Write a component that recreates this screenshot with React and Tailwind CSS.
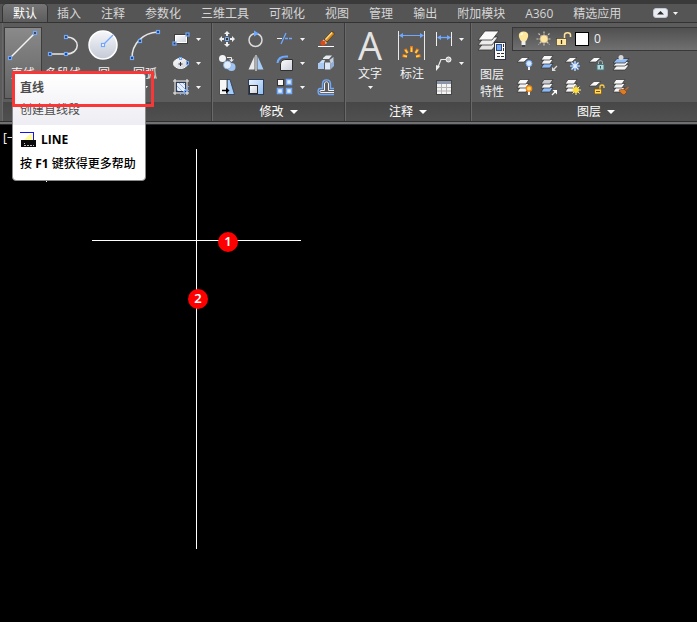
const BLUE = "#6ea8ff";

const tabs = [
  "默认",
  "插入",
  "注释",
  "参数化",
  "三维工具",
  "可视化",
  "视图",
  "管理",
  "输出",
  "附加模块",
  "A360",
  "精选应用",
];

const Icon = ({ children, w = 20, h = 20 }) => (
  <svg width={w} height={h} viewBox={`0 0 ${w} ${h}`} fill="none" className="shrink-0" aria-hidden="true">
    {children}
  </svg>
);

// blue square grip used on the drawing icons
const Grip = ({ x, y }) => (
  <rect x={x - 1.5} y={y - 1.5} width="3" height="3" fill="#334" stroke={BLUE} strokeWidth="1.2" />
);

const Caret = () => (
  <svg width="5" height="3" viewBox="0 0 5 3" className="shrink-0" aria-hidden="true">
    <path d="M0 0H5L2.5 3Z" fill="#f4f4f4" />
  </svg>
);

const Gradients = () => (
  <svg width="0" height="0" className="absolute" aria-hidden="true">
    <defs>
      <linearGradient id="silver" x1="0" y1="0" x2="1" y2="1">
        <stop offset="0" stopColor="#ffffff" />
        <stop offset="1" stopColor="#c9ced9" />
      </linearGradient>
      <linearGradient id="sky" x1="0" y1="0" x2="1" y2="1">
        <stop offset="0" stopColor="#eaf3ff" />
        <stop offset="1" stopColor="#8fbdf2" />
      </linearGradient>
      <linearGradient id="disc" x1="0" y1="0" x2="0" y2="1">
        <stop offset="0" stopColor="#f6f7fa" />
        <stop offset="1" stopColor="#c3c9d6" />
      </linearGradient>
    </defs>
  </svg>
);

/* ---------- draw ---------- */

const LineIcon = () => (
  <Icon w={38} h={34}>
    <path d="M6 31L31 6" stroke="#f5f5f5" strokeWidth="1.5" />
    <Grip x={6} y={31} />
    <Grip x={31} y={6} />
  </Icon>
);

const PolylineIcon = () => (
  <Icon w={40} h={34}>
    <path d="M7 27H23C38 27 38 10 23 10" stroke="#e6e6e6" strokeWidth="1.5" />
    <Grip x={7} y={27} />
    <Grip x={23} y={27} />
    <Grip x={23} y={10} />
  </Icon>
);

const CircleIcon = () => (
  <Icon w={40} h={34}>
    <circle cx="19" cy="18" r="14" fill="url(#disc)" stroke="#fff" strokeWidth="1.5" />
    <path d="M19 18L29 8" stroke={BLUE} strokeWidth="1.3" />
    <rect x="17.5" y="16.5" width="3" height="3" fill="#fff" stroke={BLUE} strokeWidth="1.2" />
  </Icon>
);

const ArcIcon = () => (
  <Icon w={40} h={34}>
    <path d="M7 31C7 17 17 6 33 5" stroke="#e6e6e6" strokeWidth="1.5" />
    <Grip x={7} y={31} />
    <Grip x={15} y={14} />
    <Grip x={33} y={5} />
  </Icon>
);

const RectIcon = () => (
  <Icon>
    <rect x="3.5" y="5.5" width="13" height="9" fill="url(#silver)" stroke="#3d3d3d" />
    <rect x="4.5" y="6.5" width="11" height="7" stroke="#fff" />
    <Grip x={3.5} y={14.5} />
    <Grip x={16.5} y={5.5} />
  </Icon>
);

const EllipseIcon = () => (
  <Icon>
    <ellipse cx="9.5" cy="10.5" rx="7" ry="5" fill="url(#silver)" stroke="#f6f6f6" />
    <path d="M9.5 9V13M7.5 11H11.5" stroke="#333" />
    <rect x="8.5" y="4.5" width="2" height="2" fill="#fff" stroke={BLUE} />
    <rect x="15.5" y="8.5" width="2" height="3" fill="#445" stroke={BLUE} />
  </Icon>
);

const HatchIcon = () => (
  <Icon>
    <rect x="5" y="5" width="10" height="10" fill="#e8effb" />
    <path d="M5 8L12 15M5 12L8 15M7 5L15 13M11 5L15 9" stroke="#8fb3ea" />
    <rect x="5.500" y="5.500" width="9" height="9" stroke="#2f3c58" />
    <path d="M4 2V18M16 2V18M2 4H18M2 16H18" stroke="#f3f3f3" />
    <path d="M9 18L18 9M13.5 18V13.5H18" stroke={BLUE} />
  </Icon>
);

/* ---------- modify ---------- */

const MoveIcon = () => (
  <Icon>
    <path d="M10 4V7M10 13V16M4 10H7M13 10H16" stroke="#eee" strokeWidth="2" />
    <path d="M10 2L13 5H7ZM10 18L7 15H13ZM2 10L5 7V13ZM18 10L15 13V7Z" fill="#f1f1f1" />
    <rect x="8.5" y="8.5" width="3" height="3" fill="#333" stroke={BLUE} />
  </Icon>
);

const RotateIcon = () => (
  <Icon>
    <circle cx="9.500" cy="11" r="6.500" stroke="#dcdcdc" strokeWidth="1.5" />
    <path d="M8 1.5L13 4.5L8 7.5Z" fill={BLUE} />
  </Icon>
);

const TrimIcon = () => (
  <Icon>
    <path d="M2 9.5H7" stroke="#f0f0f0" />
    <path d="M6 15L11 4" stroke={BLUE} strokeWidth="1.3" />
    <path d="M10 9.5H18" stroke={BLUE} strokeWidth="1.3" strokeDasharray="3 1" />
  </Icon>
);

const EraseIcon = () => (
  <Icon>
    <path d="M8 11L15.5 2.5L18 3.5V5.500L11 13Z" fill="#d98a1e" stroke="#4a3114" strokeWidth=".7" />
    <path d="M9.5 10.5L16 3.5" stroke="#ffe08a" strokeWidth="1.3" />
    <path d="M7.500 10.500L11 14L9.5 15L6.5 12Z" fill="#f1f1f1" />
    <circle cx="7" cy="14" r="2.500" fill="#e2480f" />
    <path d="M2 17.5H18" stroke="#fff" />
  </Icon>
);

const CopyIcon = () => (
  <Icon>
    <circle cx="5.5" cy="5.5" r="3.5" fill="#f2f3f6" />
    <path d="M10 4.5H14.5V7" stroke="#eee" />
    <path d="M12 6.5H17L14.5 9Z" fill="#eee" />
    <circle cx="14.500" cy="14" r="4" fill="#9fc4f3" />
    <circle cx="10.500" cy="12" r="4" fill="#e0ebfa" stroke="#85aee4" strokeWidth=".8" />
  </Icon>
);

const MirrorIcon = () => (
  <Icon>
    <path d="M8.5 3V16.5H2.5Z" fill="#e8eaee" />
    <path d="M11.5 3V16.5H17.5Z" fill="#a9cdf8" />
    <path d="M10 2V18" stroke="#fff" />
  </Icon>
);

const FilletIcon = () => (
  <Icon>
    <path d="M5.5 17.5V12C5.5 8 8 6.5 11 6.5H17.5V17.5Z" fill="url(#silver)" stroke="#2f2f2f" />
    <path d="M2.5 10C3 6 6 3.5 11 3.5H13" stroke={BLUE} strokeWidth="2" />
  </Icon>
);

const ExplodeIcon = () => (
  <Icon>
    <path d="M7 5L10 2.5H16L13 6H7Z" fill="#e6ebf3" />
    <path d="M13.500 7L17.5 4V9L15 11Z" fill="#c3cede" />
    <path d="M3 10L6 7H9L8 10V15H3Z" fill="#c8dcf6" />
    <path d="M2 10H8V16H2Z" fill="#a9c8f2" />
    <path d="M9 9.500H14.5V16.500H9Z" fill="#dbe7f8" />
    <path d="M15 11L18 8V13L15 16Z" fill="#8fb0dc" />
  </Icon>
);

const StretchIcon = () => (
  <Icon>
    <path d="M10 2.5H13L17.5 17.5H10Z" fill="#a5ccfa" stroke="#2a3850" strokeWidth=".8" />
    <path d="M2.5 2.5H10V17.5H2.5Z" fill="#f6f6f7" stroke="#3a3a3a" strokeWidth=".8" />
    <path d="M5 13.5H11" stroke="#000" strokeWidth="1.5" />
    <path d="M9 10.5L12.5 13.5L9 16.5Z" fill="#000" />
  </Icon>
);

const ScaleIcon = () => (
  <Icon>
    <rect x="2.5" y="2.5" width="15" height="15" fill="url(#sky)" stroke="#2c3d58" />
    <rect x="3.5" y="8.5" width="8" height="8" fill="url(#silver)" stroke="#2a2a2a" />
  </Icon>
);

const ArrayIcon = () => (
  <Icon>
    <rect x="2.5" y="2.5" width="6" height="6" fill="#f6f6f6" stroke="#333" />
    <rect x="11.5" y="2.5" width="5" height="5" fill="#dfebfb" stroke={BLUE} strokeWidth="1.5" />
    <rect x="2.5" y="11.5" width="5" height="5" fill="#dfebfb" stroke={BLUE} strokeWidth="1.5" />
    <rect x="11.5" y="11.5" width="5" height="5" fill="#dfebfb" stroke={BLUE} strokeWidth="1.5" />
  </Icon>
);

const OffsetIcon = () => (
  <Icon>
    <path
      d="M18 17.5H4C1.500 17.5 1.500 11.5 4 11.5H6.5V7C6.5 1.500 14.5 1.500 14.5 7V11.5H18"
      stroke={BLUE}
      strokeWidth="1.4"
    />
    <path d="M18 15.500H5C3.5 15.500 3.5 13.5 5 13.5H8.500V7C8.500 4 12.500 4 12.500 7V13.5H18" stroke="#f1f1f1" />
  </Icon>
);

/* ---------- annotate ---------- */

const TextIcon = () => (
  <span className="block h-[34px] w-10 text-center font-['Open_Sans',sans-serif] text-[38px] leading-[37px] text-[#e4e4e4]">
    A
  </span>
);

const DimensionIcon = () => (
  <Icon w={40} h={34}>
    <path d="M6.5 4V33M32.5 4V33" stroke="#e9e9e9" />
    <path d="M8 8.5H31" stroke={BLUE} />
    <path d="M7 8.5L11 6V11ZM32 8.5L28 6V11Z" fill={BLUE} />
    <path d="M19.5 25V19M15.500 26L13 22M23.500 26L26 22M15 29.500L10.500 28.500M24 29.500L28.500 28.500" stroke="#e5781a" strokeWidth="3" />
    <path d="M19.5 25V20.500M15.500 26L13.500 23M23.500 26L25.500 23M15 29.500L11.500 28.700M24 29.500L27.500 28.700" stroke="#ffd84a" strokeWidth="1.4" />
  </Icon>
);

const LinearIcon = () => (
  <Icon>
    <path d="M2.5 3V17M17.5 3V17" stroke="#f0f0f0" />
    <path d="M4 8.5H16" stroke={BLUE} strokeWidth="1.3" />
    <path d="M3 8.5L7 6V11ZM17 8.5L13 6V11Z" fill={BLUE} />
  </Icon>
);

const LeaderIcon = () => (
  <Icon>
    <path d="M4 14L7 6.5H12" stroke="#e8e8e8" strokeWidth="1.2" />
    <path d="M2 18L2 12L6 13.5Z" fill="#eee" />
    <circle cx="14.5" cy="6.5" r="2.5" fill="#bbb" stroke="#fff" />
  </Icon>
);

const TableIcon = () => (
  <Icon>
    <rect x="2.5" y="3.5" width="15" height="14" fill="#f4f4f4" stroke="#444" />
    <rect x="3" y="4" width="14" height="3" fill="#8c96ab" />
    <path d="M3 10.5H17M3 14H17M7.5 7V17M12.5 7V17" stroke="#b4b4b4" />
  </Icon>
);

/* ---------- layers ---------- */

const LayerPropsIcon = () => (
  <Icon w={38} h={34}>
    <path d="M5 23L11 15H25L19 23Z" fill="#e3e3e3" stroke="#333" strokeWidth=".8" />
    <path d="M5 18L11 10H25L19 18Z" fill="#ededed" stroke="#333" strokeWidth=".8" />
    <path d="M5 13L12 4H26L19 13Z" fill="#fafafa" stroke="#333" strokeWidth=".8" />
    <rect x="21.5" y="15.500" width="11" height="17" fill="#fbfbfb" stroke="#2d3342" />
    <rect x="23.5" y="17.5" width="5" height="6" fill="#78a9f4" stroke="#314c80" />
    <path d="M30.5 17V24M24 26.5H31M24 29.500H31" stroke="#333" strokeDasharray="3 1" />
  </Icon>
);

const Sheets = ({ bottom = "#f8f8f8", top = "#f8f8f8" }) => (
  <g stroke="#2e2e2e" strokeWidth=".7">
    <path d="M2 15L5 10.5H14L11 15Z" fill={bottom} />
    <path d="M2 11L5 6.5H14L11 11Z" fill="#f4f4f4" />
    <path d="M2 7L5 2.5H14L11 7Z" fill={top} />
  </g>
);

const Sheet = () => <path d="M2 9L7 4.5H14L9 9Z" fill="#fafafa" stroke="#333" strokeWidth=".7" />;

const LayerOffIcon = () => (
  <Icon>
    <Sheet />
    <path d="M14 12V17" stroke="#eee" strokeWidth="2" />
    <circle cx="14" cy="10.500" r="3" fill="#d5e8ff" stroke={BLUE} />
  </Icon>
);

const LayerIsolateIcon = () => (
  <Icon>
    <Sheets bottom="#8ebcf8" />
    <path d="M18 13L14.500 16.500" stroke="#ddd" strokeWidth="1.3" />
    <path d="M13 14V18H17Z" fill="#ddd" />
  </Icon>
);

const LayerFreezeIcon = () => (
  <Icon>
    <Sheet />
    <circle cx="12" cy="13" r="4" fill="#3972c8" />
    <path d="M12 8V18M7 13H17M8.5 9.5L15.5 16.5M15.5 9.5L8.5 16.5" stroke="#e4f0ff" strokeWidth="1.2" />
  </Icon>
);

const LayerLockIcon = () => (
  <Icon>
    <Sheet />
    <path d="M11.5 12V9.5C11.5 7 15.5 7 15.5 9.5V12" stroke="#9bbec2" />
    <rect x="10" y="11.5" width="7" height="5.5" fill="#b9d7d9" stroke="#43777b" />
    <path d="M13.5 13V15.5" stroke="#315b60" />
  </Icon>
);

const LayerCurrentIcon = () => (
  <Icon>
    <g stroke="#2c2c2c" strokeWidth=".7">
      <path d="M2 17L6 12H18L14 17Z" fill="#f5f5f5" />
      <path d="M2 13L6 8.5H18L14 13Z" fill="#f5f5f5" />
      <path d="M2 10L6 5.5H18L14 10Z" fill="#91bdf8" />
    </g>
    <circle cx="10" cy="4.5" r="2.5" fill="#d7d7d7" />
  </Icon>
);

const LayersOnIcon = () => (
  <Icon>
    <Sheets />
    <path d="M14 13V18" stroke="#f1f1f1" strokeWidth="2" />
    <circle cx="14" cy="11.5" r="2.7" fill="#ffd56b" stroke="#f5860a" strokeWidth="1.3" />
  </Icon>
);

const UnisolateIcon = () => (
  <Icon>
    <Sheets bottom="#8ebcf8" top="#c9cbd0" />
    <path d="M13 18L16 15" stroke="#fff" strokeWidth="1.3" />
    <path d="M13.5 13H18V17.5Z" fill="#fff" />
  </Icon>
);

const ThawIcon = () => (
  <Icon>
    <Sheets />
    <path d="M13 8V18M8 13H18M9.5 9.5L16.5 16.5M16.5 9.5L9.5 16.5" stroke="#ffef9a" />
    <circle cx="13" cy="13" r="3" fill="#ffdf35" />
  </Icon>
);

const UnlockIcon = () => (
  <Icon>
    <Sheet />
    <path d="M13 12V9.5C13 7.5 17 7.5 17 9.5V11" stroke="#ffcd42" strokeWidth="1.3" />
    <rect x="7.5" y="12" width="7" height="5" fill="#ffdc65" stroke="#8c5800" strokeWidth=".8" />
    <path d="M9 14.5H13" stroke="#825200" />
  </Icon>
);

const LayerMatchIcon = () => (
  <Icon>
    <Sheets />
    <path d="M17.5 10L14 13.5" stroke="#bd6b2c" strokeWidth="1.5" />
    <path d="M8 13L13 12L16 15L13 18C11 17 9 16 8 13Z" fill="#db7c2b" stroke="#733811" strokeWidth=".6" />
  </Icon>
);

const BulbIcon = () => (
  <Icon>
    <path d="M9.500 2.500C3.500 2.500 4 8 7 12H12C15 8 15.500 2.500 9.500 2.500Z" fill="#ffe79b" />
    <path d="M7.500 12H11.500V16H7.500Z" fill="#efefef" />
    <path d="M8 17H11" stroke="#222" />
    <path d="M7 6C7.5 5 8 4.5 9 4.5" stroke="#fff" strokeWidth="1.5" />
  </Icon>
);

const SunIcon = () => (
  <Icon>
    <path
      d="M10 2.5V17.5M2.5 10H17.5M4.5 4.5L15.5 15.5M15.5 4.5L4.5 15.5"
      stroke="#cfcabf"
      strokeWidth="1.2"
      strokeDasharray="2 1"
    />
    <circle cx="10" cy="10" r="4" fill="#ffe5a0" stroke="#b5aa8c" strokeWidth=".7" />
  </Icon>
);

const OpenLockIcon = () => (
  <Icon>
    <path d="M10.5 9V6C10.5 3 16.5 3 16.5 6V8" stroke="#ffe29a" strokeWidth="1.5" />
    <rect x="2.500" y="9.5" width="10" height="7" fill="#ffe7a2" stroke="#3a3328" strokeWidth=".6" />
    <path d="M7.500 11V15" stroke="#4a3505" strokeWidth="1.3" />
  </Icon>
);

/* ---------- ribbon parts ---------- */

const SmallTool = ({ label, icon: Glyph, menu }) => (
  <button type="button" aria-label={label} className="flex h-6 items-center gap-[5px]">
    <Glyph />
    {menu && <Caret />}
  </button>
);

const BigTool = ({ label, icon: Glyph, menu, active }) => (
  <button
    type="button"
    className={`flex h-[72px] flex-col items-center border ${
      active ? "w-[38px] border-[#3d3d3d] bg-linear-to-b from-[#8a8a8a] to-[#626262]" : "w-10 border-transparent"
    }`}
  >
    <span className="-mt-px">
      <Glyph />
    </span>
    <span className="mt-[5px] whitespace-nowrap leading-4">{label}</span>
    {menu && (
      <span className="mt-1">
        <Caret />
      </span>
    )}
  </button>
);

const Panel = ({ title, className = "", children }) => (
  <section className={`flex shrink-0 flex-col border-r border-[#3c3c3c] ${className}`}>
    <div className="flex border-l border-[#696969] pt-1 pb-[3px]">{children}</div>
    <button
      type="button"
      className="flex h-[19px] items-center justify-center gap-[6px] border-l border-[#696969] bg-linear-to-b from-[#474747] to-[#505050] pt-px text-white"
    >
      {title}
      {title && (
        <svg width="8" height="4" viewBox="0 0 8 4" aria-hidden="true">
          <path d="M0 0H8L4 4Z" fill="#fff" />
        </svg>
      )}
    </button>
  </section>
);

const modifyTools = [
  ["移动", MoveIcon],
  ["旋转", RotateIcon],
  ["修剪", TrimIcon, true],
  ["删除", EraseIcon],
  ["复制", CopyIcon],
  ["镜像", MirrorIcon],
  ["圆角", FilletIcon, true],
  ["分解", ExplodeIcon],
  ["拉伸", StretchIcon],
  ["缩放", ScaleIcon],
  ["阵列", ArrayIcon, true],
  ["偏移", OffsetIcon],
];

const layerTools = [
  ["关闭", LayerOffIcon],
  ["隔离", LayerIsolateIcon],
  ["冻结", LayerFreezeIcon],
  ["锁定", LayerLockIcon],
  ["置为当前", LayerCurrentIcon],
  ["打开所有图层", LayersOnIcon],
  ["取消隔离", UnisolateIcon],
  ["解冻所有图层", ThawIcon],
  ["解锁", UnlockIcon],
  ["匹配图层", LayerMatchIcon],
];

const TabBar = () => (
  <nav className="flex h-[19px] items-stretch border-b border-[#333] bg-[#555] pl-[3px] text-[#d6d6d6]">
    {tabs.map((tab, i) => (
      <button
        key={tab}
        type="button"
        className={`shrink-0 px-[10px] pt-0.5 leading-4 ${
          i === 0 ? "rounded-t-sm bg-linear-to-b from-[#767676] to-[#5c5c5c] text-white ring-1 ring-[#353535]" : ""
        }`}
      >
        {tab}
      </button>
    ))}
    <button type="button" aria-label="最小化功能区" className="ml-[22px] flex shrink-0 items-center gap-[5px]">
      <svg width="15" height="10" viewBox="0 0 15 10" aria-hidden="true">
        <rect x=".5" y=".5" width="14" height="9" rx="2.5" fill="#e9ecf2" stroke="#c4c8d0" />
        <path d="M4 6.5H11L7.5 3Z" fill="#2b2b2b" />
      </svg>
      <Caret />
    </button>
  </nav>
);

const Ribbon = () => (
  <div className="flex overflow-hidden border-b border-[#2e2e2e] bg-[#5c5c5c] pl-[2px] text-[#f2f2f2]">
    <Panel className="w-[210px]">
      <div className="flex gap-px pl-px">
        <BigTool label="直线" icon={LineIcon} active />
        <BigTool label="多段线" icon={PolylineIcon} />
        <BigTool label="圆" icon={CircleIcon} menu />
        <BigTool label="圆弧" icon={ArcIcon} menu />
      </div>
      <div className="ml-[6px] flex flex-col">
        <SmallTool label="矩形" icon={RectIcon} menu />
        <SmallTool label="椭圆" icon={EllipseIcon} menu />
        <SmallTool label="图案填充" icon={HatchIcon} menu />
      </div>
    </Panel>

    <Panel title="修改" className="w-[133px]">
      <div className="grid grid-cols-[20px_20px_32px_20px] gap-x-[9px] pl-1">
        {modifyTools.map(([label, icon, menu]) => (
          <SmallTool key={label} label={label} icon={icon} menu={menu} />
        ))}
      </div>
    </Panel>

    <Panel title="注释" className="w-[126px]">
      <div className="flex gap-[2px] pl-1">
        <BigTool label="文字" icon={TextIcon} menu />
        <BigTool label="标注" icon={DimensionIcon} />
        <div className="flex flex-col">
          <SmallTool label="线性" icon={LinearIcon} menu />
          <SmallTool label="引线" icon={LeaderIcon} menu />
          <SmallTool label="表格" icon={TableIcon} />
        </div>
      </div>
    </Panel>

    <Panel title="图层" className="min-w-[250px] grow">
      <button type="button" className="flex h-[72px] w-10 flex-col items-center">
        <LayerPropsIcon />
        <span className="mt-[5px] w-6 leading-[17px]">图层特性</span>
      </button>
      <div className="grow">
        <button
          type="button"
          className="flex h-6 w-full items-center border border-[#383838] bg-linear-to-b from-[#505050] to-[#707070] pl-px"
        >
          <BulbIcon />
          <SunIcon />
          <OpenLockIcon />
          <span className="mr-[5px] ml-px size-[14px] border border-black bg-white" />
          <span>0</span>
        </button>
        <div className="grid grid-cols-[repeat(5,20px)] gap-x-1 pl-[3px]">
          {layerTools.map(([label, icon]) => (
            <SmallTool key={label} label={label} icon={icon} />
          ))}
        </div>
      </div>
    </Panel>
  </div>
);

const Tooltip = () => (
  <div
    role="tooltip"
    className="absolute top-[73px] left-3 w-[134px] overflow-hidden rounded-sm border border-[#8a8a8a] bg-white text-black"
  >
    <div className="bg-linear-to-b from-white to-[#ededf3] px-[7px] pt-1.5 pb-[7px] text-[#4c4c4c]">
      <p className="font-semibold leading-4">直线</p>
      <p className="mt-1.5 leading-4">创建直线段</p>
    </div>
    <div className="px-[7px] pt-[7px] pb-2 font-bold">
      <p className="flex items-center gap-[5px] leading-4">
        <svg width="16" height="16" viewBox="0 0 16 16" aria-hidden="true">
          <path d="M0 1H14V15H0Z" fill="#fff" />
          <path d="M3 9L10 2H13V11H3Z" fill="#fffa9a" />
          <path d="M0 .5H14M13.5 0V9" stroke="#1414e6" />
          <rect x="1" y="8" width="15" height="7" fill="#0a0a0a" />
          <path d="M4 13.5H14M4 11L5 12" stroke="#bbb" strokeDasharray="2 1" />
        </svg>
        <span>LINE</span>
      </p>
      <p className="mt-2 whitespace-nowrap leading-4">
        <span className="font-medium">按</span> F1 <span className="font-medium">键获得更多帮助</span>
      </p>
    </div>
  </div>
);

const Marker = ({ children, className }) => (
  <span
    className={`absolute flex size-5 items-center justify-center rounded-full bg-[#ff0000] font-['Noto_Sans','Open_Sans',sans-serif] text-[13px] font-semibold text-white ${className}`}
  >
    {children}
  </span>
);

const Canvas = () => (
  <main className="relative min-h-[440px] grow overflow-hidden bg-black text-white">
    <span className="absolute top-[5px] left-[3px] leading-4">[−]</span>
    <span className="absolute top-14 left-[46px] size-px bg-white" />
    <div className="absolute top-[115px] left-[92px] h-px w-[209px] bg-white" />
    <div className="absolute top-6 left-[196px] h-[400px] w-px bg-white" />
    <Marker className="top-[107px] left-[218px]">1</Marker>
    <Marker className="top-[164px] left-[188px]">2</Marker>
  </main>
);

export default function App() {
  return (
    <div className="relative flex min-h-screen flex-col bg-black font-['Open_Sans','Noto_Sans_CJK_SC',sans-serif] text-[12px]">
      <Gradients />
      <div className="h-1 bg-[#3a3a3a]" />
      <TabBar />
      <Ribbon />
      <div className="h-[3px] border-b border-[#22262e] bg-[#707070]" />
      <Canvas />
      <Tooltip />
      {/* highlight around the command name */}
      <div className="pointer-events-none absolute top-[71px] left-3 h-9 w-[142px] border-3 border-[#fb3636]" />
    </div>
  );
}
